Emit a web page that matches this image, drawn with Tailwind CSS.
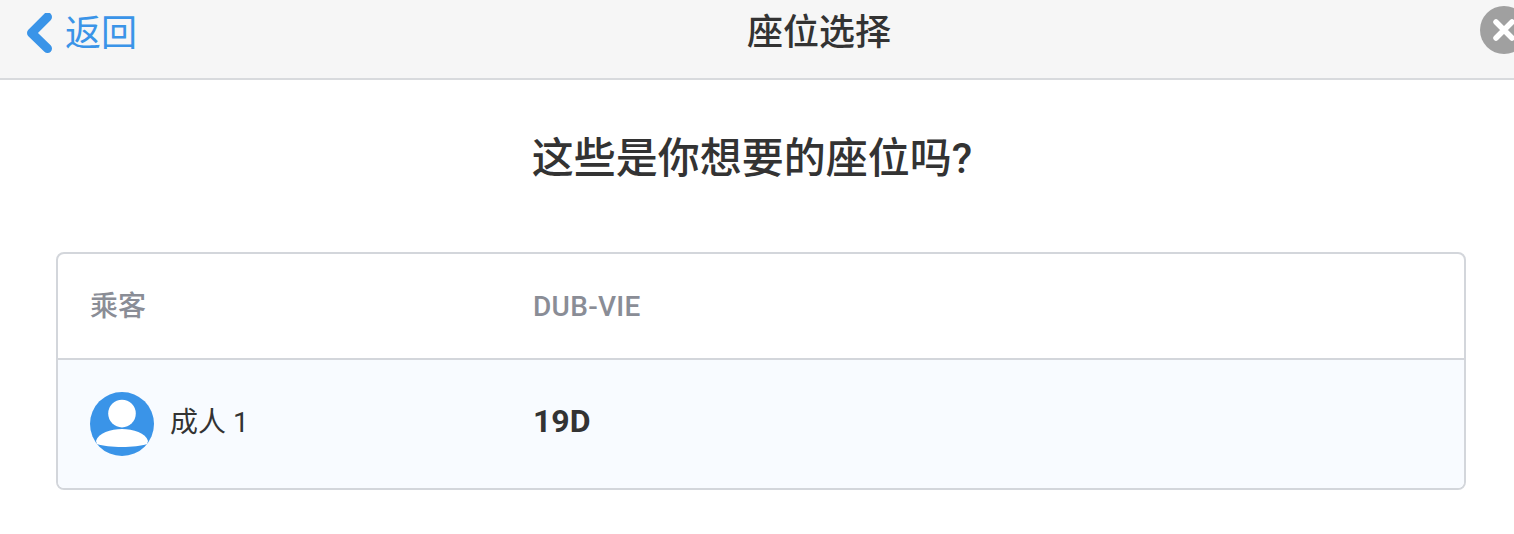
<!DOCTYPE html>
<html lang="zh-CN">
<head>
  <meta charset="UTF-8" />
  <title>座位选择</title>
  <script src="https://cdn.jsdelivr.net/npm/@tailwindcss/browser@4"></script>
</head>
<body class="bg-white overflow-hidden font-['Roboto','Noto_Sans_CJK_SC',sans-serif] text-[#333]">
  <!-- header -->
  <header class="relative flex items-center justify-center h-20 bg-[#f6f6f6] border-b-2 border-[#d8dadd]">
    <a class="absolute left-[26px] top-[11px] flex items-center gap-[12px] text-[#3a94e8]">
      <svg width="27" height="40" viewBox="0 0 27 40" fill="none">
        <path d="M21.5 4 L5.5 20 L21.5 35.5" stroke="#3a94e8" stroke-width="9" stroke-linecap="round" stroke-linejoin="round" />
      </svg>
      <span class="text-[36px] leading-10 pt-[3px]">返回</span>
    </a>
    <h1 class="text-[36px] font-medium leading-10 -mt-[13px] ml-[124px]">座位选择</h1>
    <div class="absolute left-[1480px] top-[6px] w-12 h-12 rounded-full bg-[#a0a0a0]">
      <svg width="48" height="48" viewBox="0 0 48 48" fill="none">
        <path d="M16 16 L32 32 M32 16 L16 32" stroke="#fff" stroke-width="5.5" stroke-linecap="round" />
      </svg>
    </div>
  </header>

  <main>
    <h2 class="mt-[55px] mr-[8px] -ml-[2px] text-center text-[42px] leading-[48px] font-medium">这些是你想要的座位吗?</h2>

    <div class="mt-[69px] ml-[56px] mr-[48px] border-2 border-[#d3d6db] rounded-lg overflow-hidden">
      <div class="flex items-center h-[106px] pt-[2px] border-b-2 border-[#d3d6db] text-[#8a8d96] text-[28px] font-medium">
        <div class="w-[475px] pl-[32px]">乘客</div>
        <div class="tracking-[0.3px]">DUB-VIE</div>
      </div>
      <div class="flex items-center h-[128px] bg-[#f8fbff]">
        <div class="w-[475px] pl-[32px] flex items-center gap-4">
          <svg width="64" height="64" viewBox="0 0 64 64">
            <circle cx="32" cy="32" r="32" fill="#3a94e8" />
            <circle cx="32" cy="21.6" r="13.8" fill="#fff" />
            <path d="M6 49 C8 41 21 37 32 37 C43 37 56 41 58 49 L57 52 C46 56 18 56 7 52 Z" fill="#fff" />
          </svg>
          <span class="text-[28px] pb-[2px]">成人 1</span>
        </div>
        <div class="text-[32px] font-bold pb-[6px]">19D</div>
      </div>
    </div>
  </main>
</body>
</html>
